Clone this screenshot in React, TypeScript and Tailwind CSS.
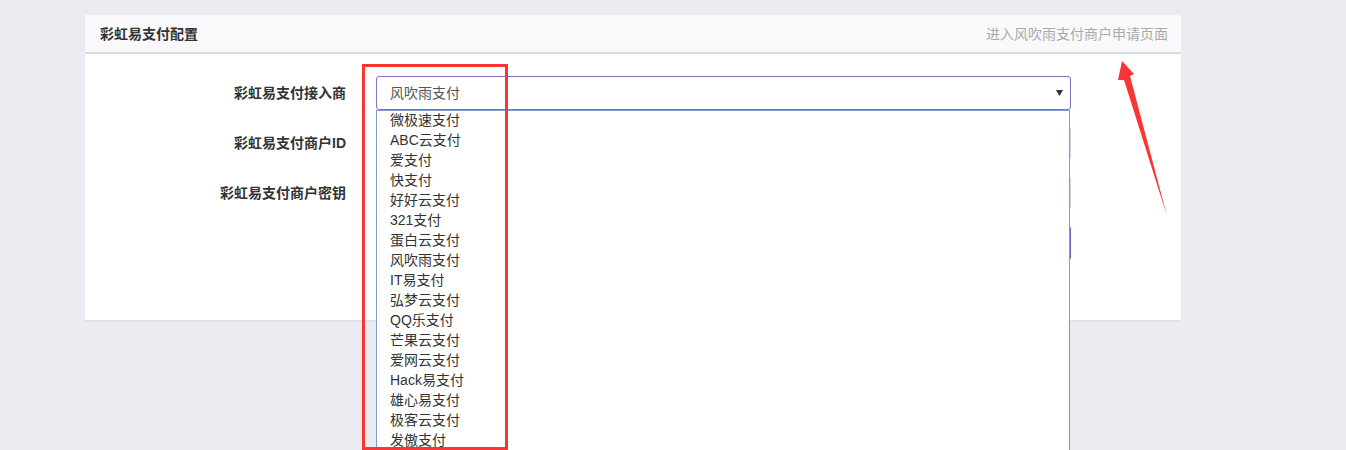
import React from "react";

const providers = [
  "微极速支付",
  "ABC云支付",
  "爱支付",
  "快支付",
  "好好云支付",
  "321支付",
  "蛋白云支付",
  "风吹雨支付",
  "IT易支付",
  "弘梦云支付",
  "QQ乐支付",
  "芒果云支付",
  "爱网云支付",
  "Hack易支付",
  "雄心易支付",
  "极客云支付",
  "发傲支付",
];

function FormRow({ label, children }: { label: string; children: React.ReactNode }) {
  return (
    <div className="flex items-center h-[34px] mb-[16px]">
      <div className="w-[261px] text-right font-bold text-[14px] text-[#333]">{label}</div>
      <div className="ml-[30px] w-[695px] h-[34px] relative">{children}</div>
    </div>
  );
}

export default function App() {
  return (
    <div
      className="relative h-[450px] overflow-hidden bg-[#edebf2]"
      style={{ fontFamily: '"Liberation Sans", "Noto Sans CJK SC", sans-serif' }}
    >
      <div className="pt-[15px] pl-[85px]">
        <div className="w-[1096px] bg-white border-b-2 border-[#e4e1ec]">
          {/* panel heading */}
          <div className="h-[39px] bg-[#f9f9fb] border-b-2 border-[#dcdae5] flex items-center justify-between pl-[15px] pr-[13px]">
            <span className="font-bold text-[14px] text-[#333] leading-none">彩虹易支付配置</span>
            <span className="text-[14px] text-[#aaa] leading-none">进入风吹雨支付商户申请页面</span>
          </div>
          {/* panel body */}
          <div className="pt-[22px] h-[266px]">
            <FormRow label="彩虹易支付接入商">
              <div className="h-[34px] border border-[#8a6cc4] rounded-[3px] bg-white flex items-center pl-[13px] pr-[7px] justify-between">
                <span className="text-[14px] text-[#555]">风吹雨支付</span>
                <svg width="7" height="6" viewBox="0 0 7 6">
                  <path d="M0 0 H7 L3.5 6 Z" fill="#2f2f3a" />
                </svg>
              </div>
              {/* open option list */}
              <div className="absolute left-0 top-[34px] w-[694px] z-20 bg-white border-x border-t border-[#7b9bd6]">
                {providers.map((p) => (
                  <div key={p} className="h-[20px] leading-[19px] pl-[13px] text-[14px] text-[#333]">
                    {p}
                  </div>
                ))}
              </div>
            </FormRow>
            <FormRow label="彩虹易支付商户ID">
              <div className="h-[34px] border border-[#d4d1e6] rounded-[3px] bg-white" />
            </FormRow>
            <FormRow label="彩虹易支付商户密钥">
              <div className="h-[34px] border border-[#d4d1e6] rounded-[3px] bg-white" />
            </FormRow>
            <FormRow label="">
              <div className="h-[34px] rounded-[3px] bg-[#7e5ec2]" />
            </FormRow>
          </div>
        </div>
      </div>

      {/* annotation marks */}
      <svg className="absolute left-0 top-0 z-30 pointer-events-none" width="1346" height="450">
        <rect x="363.5" y="65.5" width="143" height="383" fill="none" stroke="#fb3434" strokeWidth="3" />
        <polygon
          points="1122,61 1134,74 1130,76 1167,216 1124,80 1118,80"
          fill="#fb3434"
        />
      </svg>
    </div>
  );
}
